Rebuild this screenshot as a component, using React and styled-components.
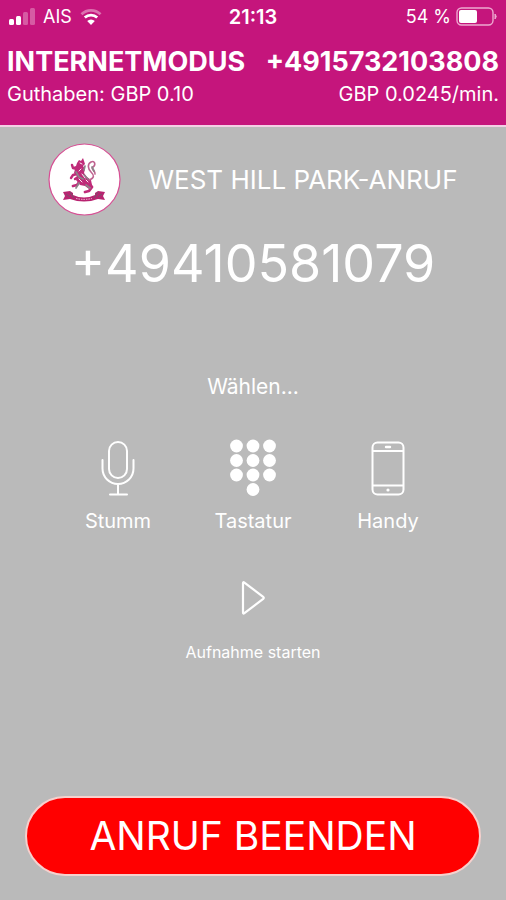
import React from "react";
import styled, { createGlobalStyle } from "styled-components";

const GlobalStyle = createGlobalStyle`
  *, *::before, *::after { box-sizing: border-box; }
  body {
    margin: 0;
    background: #bababa;
    color: #fff;
    font-family: Inter, "Liberation Sans", sans-serif;
  }
  h1, p { margin: 0; font-weight: inherit; }
  button { font-family: inherit; color: inherit; cursor: pointer; }
`;

const Screen = styled.div`
  display: flex;
  flex-direction: column;
  min-height: 100vh;
  background: #bababa;
`;

const Header = styled.header`
  background: #c5157c;
  border-bottom: 2px solid #f3cfe4;
  padding-bottom: 15px;
`;

const StatusBar = styled.div`
  display: grid;
  grid-template-columns: 1fr auto 1fr;
  align-items: center;
  height: 34px;
  padding: 0 8px;
  font-size: 18px;
  line-height: 24px;
`;

const StatusGroup = styled.div`
  display: flex;
  align-items: center;
  justify-content: ${(p) => (p.$end ? "flex-end" : "flex-start")};
  gap: ${(p) => (p.$end ? 5 : 8)}px;
`;

const Clock = styled.time`
  font-size: 20px;
  font-weight: 600;
`;

const Account = styled.div`
  padding: 11px 7px 0;
`;

const AccountRow = styled.div`
  display: flex;
  justify-content: space-between;
  font-size: ${(p) => (p.$strong ? 27 : 20)}px;
  font-weight: ${(p) => (p.$strong ? 700 : 400)};
  line-height: ${(p) => (p.$strong ? 34 : 31)}px;
  white-space: nowrap;
`;

const Main = styled.main`
  flex: 1;
  display: flex;
  flex-direction: column;
  align-items: center;
  padding: 16px 25px 24px;
`;

const Caller = styled.div`
  display: flex;
  align-items: center;
  gap: 27px;
  font-size: 26px;
  line-height: 32px;
  white-space: nowrap;
`;

const Crest = styled.svg`
  width: 73px;
  height: 73px;
  flex: none;
`;

const PhoneNumber = styled.h1`
  margin-top: 16px;
  font-size: 52px;
  line-height: 64px;
`;

const CallState = styled.p`
  margin-top: 77px;
  font-size: 21px;
  line-height: 28px;
`;

const Controls = styled.div`
  display: grid;
  grid-template-columns: repeat(3, 135px);
  justify-content: center;
  margin-top: 38px;
`;

const ControlButton = styled.button`
  display: flex;
  flex-direction: column;
  align-items: center;
  gap: ${(p) => (p.$small ? 22 : 10)}px;
  margin: ${(p) => (p.$small ? "45px 0 24px" : "0")};
  padding: 0;
  border: 0;
  background: none;
  font-size: ${(p) => (p.$small ? 16 : 20)}px;
  line-height: 28px;
`;

const EndCall = styled.button`
  width: 100%;
  height: 80px;
  margin-top: auto;
  padding: 0;
  border: 2px solid #f6d0cd;
  border-radius: 40px;
  background: #ff0000;
  font-size: 39px;
  line-height: 48px;
`;

const Signal = () => (
  <svg width="27" height="18" viewBox="0 0 27 18" fill="#fff" aria-hidden="true">
    <rect x="1" y="11" width="5" height="6" rx="1.5" />
    <rect x="8" y="8" width="5" height="9" rx="1.5" />
    <rect x="15" y="4" width="5" height="13" rx="1.5" opacity="0.3" />
    <rect x="22" y="0" width="5" height="17" rx="1.5" opacity="0.3" />
  </svg>
);

const Wifi = () => (
  <svg width="22" height="18" viewBox="0 0 22 18" fill="none" stroke="#fff" strokeWidth="2.8" aria-hidden="true">
    <path d="M1.5 6.2a13.5 13.5 0 0 1 19 0" opacity="0.4" />
    <path d="M4.8 9.6a9 9 0 0 1 12.4 0" />
    <path d="M7.2 13a5.4 5.4 0 0 1 7.6 0L11 17Z" fill="#fff" stroke="none" />
  </svg>
);

const Battery = () => (
  <svg width="42" height="20" viewBox="0 0 42 20" aria-hidden="true">
    <rect x="1" y="1" width="36" height="17" rx="4.5" fill="none" stroke="#eda9d0" strokeWidth="1.4" />
    <rect x="3" y="3" width="18" height="13" rx="2" fill="#fff" />
    <path d="M39 7q2.5 2.5 0 5Z" fill="#eda9d0" stroke="#eda9d0" />
  </svg>
);

const SchoolCrest = () => (
  <Crest viewBox="0 0 73 73" role="img" aria-label="West Hill Park">
    <circle cx="36.5" cy="36.5" r="35.5" fill="#fff" stroke="#d84e94" strokeWidth="1.2" />
    <g strokeLinecap="round" strokeLinejoin="round">
      <path d="M29 20l2-3 2 1 2-3 1 3 1 3-2 2 2 3-1 4 3 4 4 3 1 5-3 4-4-3-5-1-4-5 1-4-3-3 1-4-2-2 3-1z" fill="#bf2b79" />
      <path d="M41 37c6-2 5-5 2-8s-4-8 0-10 5 3 2 5 3 4 2 7" fill="none" stroke="#bf6390" strokeWidth="1.6" />
      <path d="M29 26l-4-1-1-3M29 31l-4 1-2 3M30 34l-3 2" fill="none" stroke="#bf2b79" strokeWidth="2.4" />
      <path d="M32 38l-3 4-4 1M41 40l3 4-3 4-4 1" fill="none" stroke="#bf2b79" strokeWidth="2.8" />
      <path d="M37 23l-1 4M28 29l3 5 4 2M36 32l4 4M31 40l-3 5M38 42l4 3M44 24l2 4" fill="none" stroke="#8b8489" strokeWidth="1.7" />
      <path d="M32 20l2 1M33 26l-2 2M34 31l3 4M38 37l2 2M31 36l3 3" fill="none" stroke="#fff" strokeWidth="0.9" />
    </g>
    <path d="M15 49l7-1 3 2v2q11 5 22 0v-2l3-2 7 1-2 4 2 4-7-1q-14 5-28 0l-7 1 2-4z" fill="#b82370" />
    <path d="M22 49l4 6M50 49l-4 6M18 51l4 3M54 51l-4 3" fill="none" stroke="#73566b" strokeWidth="1" />
    <path d="M28 55.5q8 1.8 16 0" fill="none" stroke="#f3c4dc" strokeWidth="1" strokeDasharray="1.5 1" />
  </Crest>
);

const Microphone = () => (
  <svg width="34" height="58" viewBox="0 0 34 58" fill="none" stroke="#fff" strokeWidth="2" strokeLinecap="round" aria-hidden="true">
    <rect x="8" y="3" width="18" height="36" rx="9" />
    <path d="M1.5 21v8.5a15.5 15.5 0 0 0 31 0V21M17 45v10M9 55.5h17" />
  </svg>
);

const Keypad = () => (
  <svg width="48" height="58" viewBox="0 0 48 58" fill="#fff" aria-hidden="true">
    {[7, 21.5, 36].map((y) =>
      [7.5, 24, 40.5].map((x) => <circle key={`${x}-${y}`} cx={x} cy={y} r="6.4" />)
    )}
    <circle cx="24" cy="50.5" r="6.4" />
  </svg>
);

const Handset = () => (
  <svg width="34" height="58" viewBox="0 0 34 58" fill="none" stroke="#fff" strokeWidth="2" aria-hidden="true">
    <rect x="1.5" y="3.5" width="31" height="52" rx="5" />
    <path d="M2 12h30M2 46.5h30" />
    <path d="M15 8h4" strokeWidth="2.4" strokeLinecap="round" />
    <circle cx="17" cy="51" r="1.6" fill="#fff" stroke="none" />
  </svg>
);

const Play = () => (
  <svg width="26" height="36" viewBox="0 0 26 36" fill="none" stroke="#fff" strokeWidth="2.2" strokeLinejoin="round" aria-hidden="true">
    <path d="M3 3.2q0-1.6 1.4-.6l18.8 14.2q1.2 1 0 2L4.4 33.2Q3 34.2 3 32.6Z" />
  </svg>
);

export default function App() {
  return (
    <Screen>
      <GlobalStyle />
      <Header>
        <StatusBar>
          <StatusGroup>
            <Signal />
            <span>AIS</span>
            <Wifi />
          </StatusGroup>
          <Clock>21:13</Clock>
          <StatusGroup $end>
            <span>54 %</span>
            <Battery />
          </StatusGroup>
        </StatusBar>
        <Account>
          <AccountRow $strong>
            <span>INTERNETMODUS</span>
            <span>+4915732103808</span>
          </AccountRow>
          <AccountRow>
            <span>Guthaben: GBP 0.10</span>
            <span>GBP 0.0245/min.</span>
          </AccountRow>
        </Account>
      </Header>
      <Main>
        <Caller>
          <SchoolCrest />
          <span>WEST HILL PARK-ANRUF</span>
        </Caller>
        <PhoneNumber>+49410581079</PhoneNumber>
        <CallState role="status">Wählen...</CallState>
        <Controls>
          <ControlButton type="button">
            <Microphone />
            Stumm
          </ControlButton>
          <ControlButton type="button">
            <Keypad />
            Tastatur
          </ControlButton>
          <ControlButton type="button">
            <Handset />
            Handy
          </ControlButton>
        </Controls>
        <ControlButton type="button" $small>
          <Play />
          Aufnahme starten
        </ControlButton>
        <EndCall type="button">ANRUF BEENDEN</EndCall>
      </Main>
    </Screen>
  );
}
